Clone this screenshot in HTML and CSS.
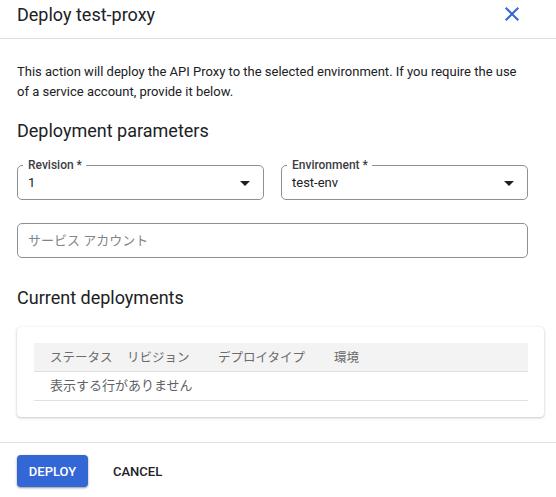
FILE: index.html
```html
<!DOCTYPE html>
<html lang="ja">
<head>
<meta charset="utf-8">
<title>Deploy test-proxy</title>
<link rel="stylesheet" href="styles.css">
</head>
<body>
<div class="dialog">
  <div class="header">
    <h1 class="title">Deploy test-proxy</h1>
    <button class="close" aria-label="Close">
      <svg viewBox="0 0 24 24" width="24" height="24"><path d="M19 6.41L17.59 5 12 10.59 6.41 5 5 6.41 10.59 12 5 17.59 6.41 19 12 13.41 17.59 19 19 17.59 13.41 12z" fill="currentColor"/></svg>
    </button>
  </div>
  <div class="content">
    <p class="intro">This action will deploy the API Proxy to the selected environment. If you require the use of a service account, provide it below.</p>
    <h2 class="section">Deployment parameters</h2>
    <div class="fields">
      <div class="field">
        <span class="label">Revision *</span>
        <span class="value">1</span>
        <span class="arrow"></span>
      </div>
      <div class="field">
        <span class="label">Environment *</span>
        <span class="value">test-env</span>
        <span class="arrow"></span>
      </div>
    </div>
    <div class="field wide">
      <span class="placeholder">サービス アカウント</span>
    </div>
    <h2 class="section section2">Current deployments</h2>
    <div class="card">
      <div class="table">
        <div class="thead">
          <span class="c1">ステータス</span>
          <span class="c2">リビジョン</span>
          <span class="c3">デプロイタイプ</span>
          <span class="c4">環境</span>
        </div>
        <div class="trow">表示する行がありません</div>
      </div>
    </div>
  </div>
  <div class="footer">
    <button class="btn primary">DEPLOY</button>
    <button class="btn text">CANCEL</button>
  </div>
</div>
</body>
</html>
```

FILE: styles.css
```css
* { box-sizing: border-box; }
html, body {
  margin: 0;
  padding: 0;
  background: #fff;
}
body {
  font-family: Roboto, "Noto Sans CJK JP", sans-serif;
  color: #202124;
}
.dialog {
  width: 556px;
  height: 497px;
  overflow: hidden;
}
.header {
  height: 39px;
  border-bottom: 1px solid #e0e0e0;
  display: flex;
  justify-content: space-between;
  align-items: flex-start;
  padding: 3px 32px 0 17px;
}
.title {
  margin: 0;
  font-size: 18px;
  font-weight: 400;
  line-height: 24px;
  color: #202124;
}
.close {
  border: 0;
  background: none;
  padding: 0;
  margin: -1px 0 0 0;
  width: 24px;
  height: 24px;
  color: #3367d6;
  display: block;
}
.close svg { display: block; }
.content {
  padding: 23px 28px 0 17px;
}
.intro {
  margin: 0;
  font-size: 13px;
  line-height: 20px;
  color: #202124;
}
.section {
  margin: 17px 0 0 0;
  font-size: 18px;
  font-weight: 400;
  line-height: 24px;
  color: #202124;
}
.fields {
  margin-top: 22px;
  display: grid;
  grid-template-columns: 247px 247px;
  column-gap: 17px;
}
.field {
  position: relative;
  height: 35px;
  border: 1px solid #8d9196;
  border-radius: 5px;
  display: flex;
  align-items: center;
  padding: 0 13px 0 10px;
}
.field.wide {
  margin-top: 23px;
  width: 511px;
}
.label {
  position: absolute;
  top: -9px;
  left: 5px;
  padding: 0 4px 0 5px;
  background: #fff;
  font-size: 12px;
  font-weight: 500;
  line-height: 16px;
  color: #3c4043;
}
.value {
  flex: 1;
  font-size: 13px;
  line-height: 20px;
  color: #202124;
  padding-top: 1px;
}
.placeholder {
  font-size: 13px;
  line-height: 20px;
  color: #80868b;
}
.arrow {
  width: 0;
  height: 0;
  border-left: 5px solid transparent;
  border-right: 5px solid transparent;
  border-top: 5px solid #202124;
  margin-top: 1px;
}
.section2 {
  margin-top: 28px;
}
.card {
  margin-top: 17px;
  width: 527px;
  border-radius: 4px;
  background: #fff;
  box-shadow: 0 1px 3px rgba(0,0,0,0.22), 0 0 1px rgba(0,0,0,0.12);
  padding: 16px 16px 16px 17px;
}
.thead {
  height: 29px;
  background: #f3f3f3;
  border-bottom: 1px solid #e0e0e0;
  display: grid;
  grid-template-columns: 77px 91px 116px 1fr;
  align-items: center;
  padding-left: 16px;
  padding-bottom: 1px;
  font-size: 12.5px;
  color: #6b6b6b;
}
.trow {
  height: 29px;
  border-bottom: 1px solid #e0e0e0;
  display: flex;
  align-items: center;
  padding-left: 16px;
  padding-bottom: 3px;
  font-size: 13px;
  color: #5f6368;
}
.footer {
  margin-top: 25px;
  border-top: 1px solid #e0e0e0;
  padding: 12px 17px 0 17px;
  display: flex;
  align-items: center;
  gap: 13px;
}
.btn {
  font-family: Roboto, sans-serif;
  font-size: 13px;
  font-weight: 500;
  border: 0;
  height: 32px;
  border-radius: 4px;
  cursor: pointer;
}
.btn.primary {
  width: 71px;
  background: #3367d6;
  color: #fff;
  box-shadow: 0 1px 2px rgba(0,0,0,0.3), 0 1px 3px rgba(0,0,0,0.15);
}
.btn.text {
  background: none;
  color: #202124;
  padding: 0 12px;
}
```
